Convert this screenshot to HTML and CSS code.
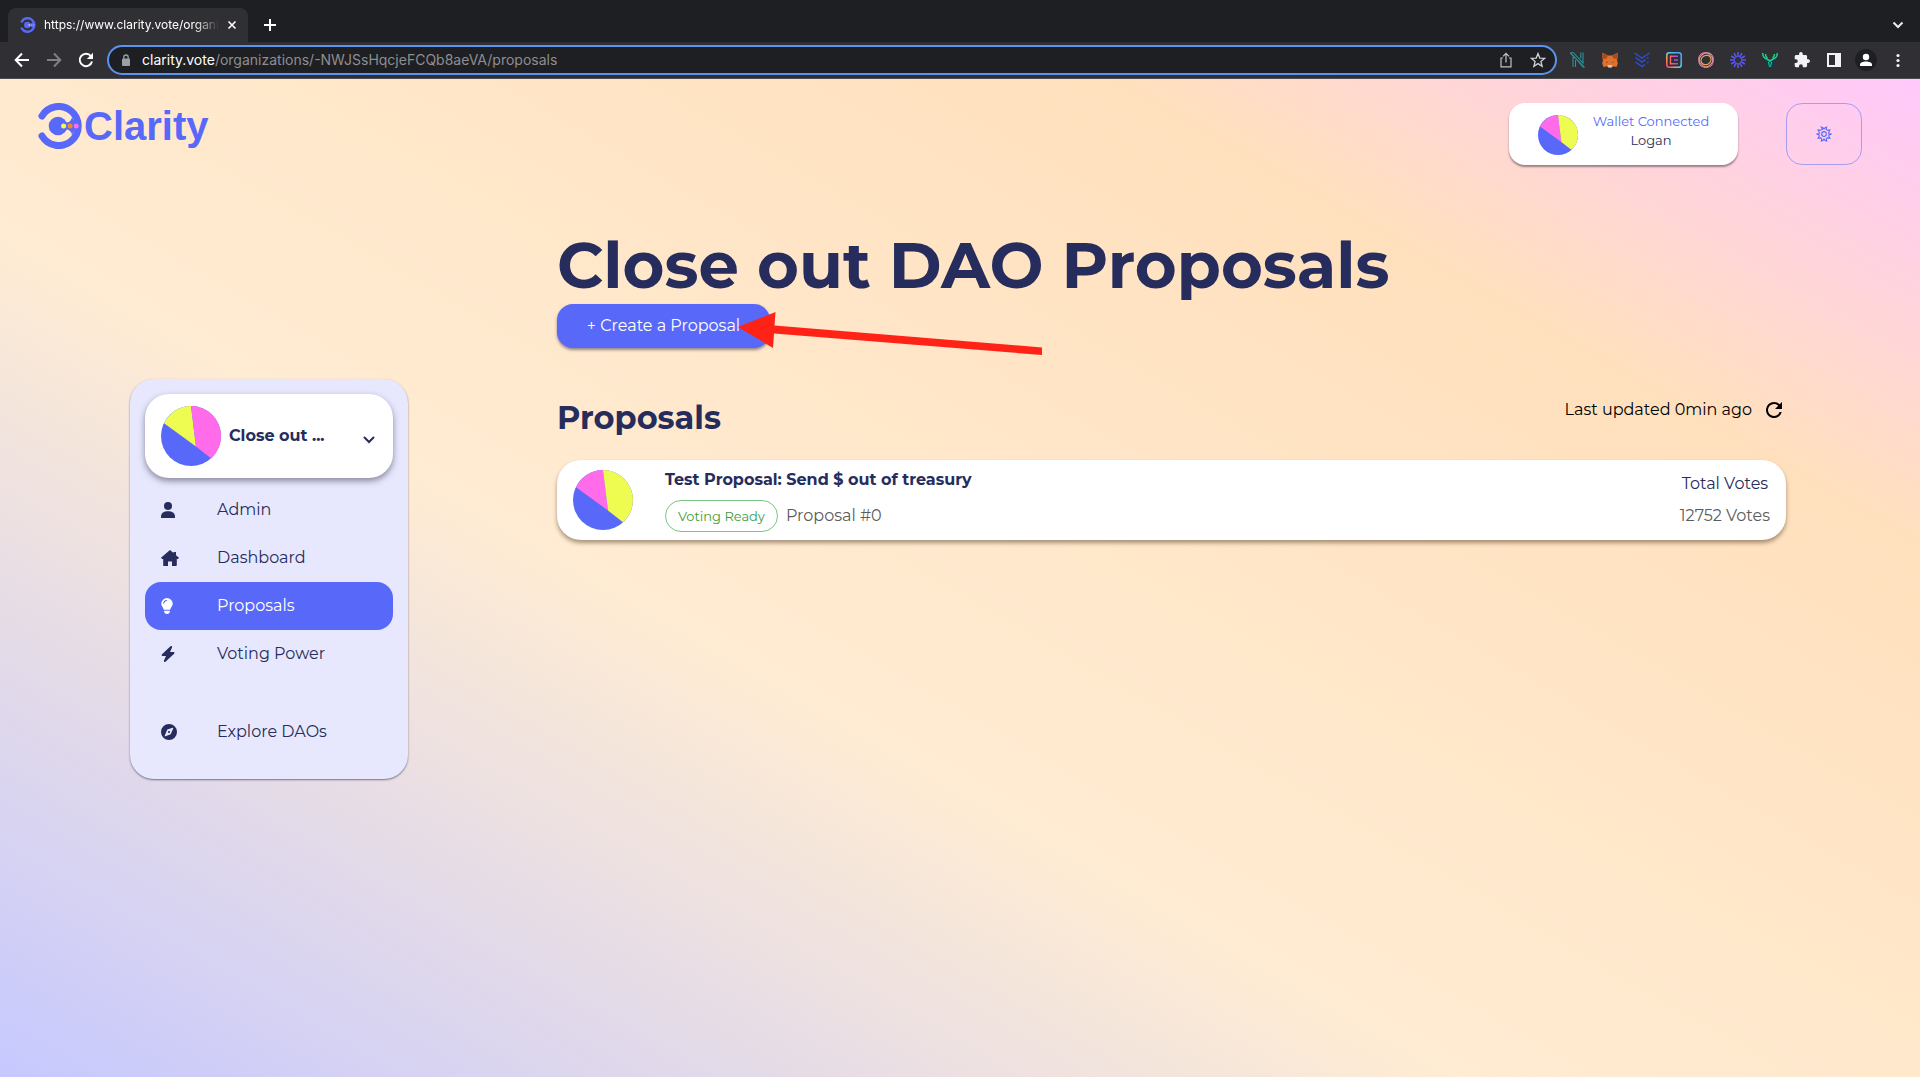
FILE: index.html
```html
<!DOCTYPE html>
<html lang="en">
<head>
<meta charset="utf-8">
<meta name="viewport" content="width=device-width, initial-scale=1">
<title>Clarity</title>
<link rel="stylesheet" href="styles.css">
</head>
<body>
<svg class="defs" aria-hidden="true">
  <symbol id="pie" viewBox="-30 -30 60 60">
    <circle class="pie-base" r="30"/>
    <path class="pie-left" d="M5 10.5 0 -30A30 30 0 0 0 -27 -12.7Z"/>
    <path class="pie-right" d="M5 10.5 0 -30A30 30 0 0 1 20 22.3Z"/>
  </symbol>
  <symbol id="mark" viewBox="0 0 44 46">
    <g fill="none" stroke="#5869f9" stroke-width="7" stroke-linecap="round">
      <path d="M4 13A19.500 19.500 0 1 1 4 33"/>
    </g>
    <circle cx="20" cy="23" r="9.300" fill="#5869f9"/>
    <path d="M27 19.500Q33 20 34 14l5 9-5 9Q33 26 27 26.500z" fill="#5869f9"/>
    <circle cx="25.600" cy="23" r="2.500" fill="#eefc52"/>
    <circle cx="32" cy="23" r="2.500" fill="#f58a1f"/>
    <circle cx="38.200" cy="23" r="2.500" fill="#ff6be8"/>
  </symbol>
</svg>

<header class="browser">
  <div class="tabs">
    <div class="tab">
      <svg class="i16"><use href="#mark"/></svg>
      <span class="tab-title">https://www.clarity.vote/organi</span>
      <button class="bare" aria-label="Close tab"><svg width="10" height="10" viewBox="0 0 10 10"><path d="M1.500 1.500l7 7M8.500 1.500l-7 7" stroke="#fff" stroke-width="1.600"/></svg></button>
    </div>
    <button class="bare new-tab" aria-label="New tab"><svg width="12" height="12" viewBox="0 0 12 12"><path d="M6 0v12M0 6h12" stroke="#fff" stroke-width="2"/></svg></button>
    <button class="bare tab-search" aria-label="Search tabs"><svg width="12" height="8" viewBox="0 0 12 8"><path d="M1.500 1.500L6 6l4.500-4.500" fill="none" stroke="#e8eaed" stroke-width="2"/></svg></button>
  </div>
  <div class="toolbar">
    <button class="tool" aria-label="Back"><svg class="i16" viewBox="0 0 16 16"><path d="M15 8H2M8 1.500L1.700 8 8 14.500" fill="none" stroke="#fff" stroke-width="2"/></svg></button>
    <button class="tool" aria-label="Forward"><svg class="i16" viewBox="0 0 16 16"><path d="M1 8h13M8 1.500L14.300 8 8 14.500" fill="none" stroke="#808184" stroke-width="2"/></svg></button>
    <button class="tool" aria-label="Reload"><svg class="i16" viewBox="0 0 16 16"><path d="M13 4.300A6.200 6.200 0 1 0 14 9.500" fill="none" stroke="#fff" stroke-width="2"/><path d="M15 .8V7H8.800z" fill="#fff"/></svg></button>
    <div class="omnibox">
      <svg width="10" height="12" viewBox="0 0 10 12"><rect x="1" y="4.500" width="8" height="7.500" rx="1" fill="#9aa0a6"/><path d="M2.800 5V3.200a2.200 2.200 0 0 1 4.400 0V5" fill="none" stroke="#9aa0a6" stroke-width="1.300"/></svg>
      <div class="url" role="textbox" contenteditable="true" aria-label="Address"><span class="host">clarity.vote</span>/organizations/-NWJSsHqcjeFCQb8aeVA/proposals</div>
      <button class="tool" aria-label="Share"><svg class="i16" viewBox="0 0 16 16"><path d="M5 6H3v8.800h10V6h-2M8 10.500V1.500M5 4.300L8 1.300l3 3" fill="none" stroke="#bdc1c6" stroke-width="1.200"/></svg></button>
      <button class="tool" aria-label="Bookmark"><svg class="i16" viewBox="0 0 16 16"><path d="M8 1.600l1.800 4.500 4.800.3-3.700 3.100 1.200 4.700L8 11.600l-4.100 2.600 1.200-4.700L1.400 6.400l4.800-.3z" fill="none" stroke="#d0d2d6" stroke-width="1.300"/></svg></button>
    </div>
    <button class="tool" aria-label="Extension N"><svg class="i16" viewBox="0 0 16 16"><path d="M3 15V3.500L13.500 15.500M0 .7h3.500L13 11V.5M0 .7L14.500 15.500M5.500 8v7M10.800 .5v6" fill="none" stroke="#2b9398" stroke-width="1.100"/></svg></button>
    <button class="tool" aria-label="MetaMask"><svg class="i16" viewBox="0 0 16 16"><path d="M.5.8L6 3.500h4L15.500.8 16 5l-1 3 .8 3.500-1.300 3.500-4-.8-1 1.300h-3l-1-1.300-4 .8L.2 11.500 1 8 0 5z" fill="#e2702a"/><path d="M.5.800L6 3.500 4.500 6.500 1 7 0 5zM15.500.8L10 3.500l1.500 3 3.500.5L16 5z" fill="#a54c20"/><path d="M6 13h4l.5 1.500-1 1h-3l-1-1z" fill="#d5c5b8"/><path d="M4 9.500l2.500 1H4.800zM12 9.500l-2.500 1h1.700z" fill="#2b3340"/></svg></button>
    <button class="tool" aria-label="Extension chevrons"><svg class="i16" viewBox="0 0 16 16"><path d="M.5 1L8 6l7.500-5M1.500 5.500L8 10l3.500-2.300M1.500 10L8 14.500l3-2M13 6.500l1.500-1M13 11l1.500-1" fill="none" stroke="#2e4bd3" stroke-width="1.500"/></svg></button>
    <button class="tool" aria-label="Extension E"><svg class="i16" viewBox="0 0 16 16"><defs><linearGradient id="frame" x1="0" y1="1" x2="1" y2="0"><stop offset="0" stop-color="#ff3f7f"/><stop offset=".3" stop-color="#ffa04b"/><stop offset=".5" stop-color="#52dce0"/><stop offset=".8" stop-color="#55a8f8"/></linearGradient><linearGradient id="letter"><stop offset="0" stop-color="#ff6a5a"/><stop offset=".6" stop-color="#b04df0"/><stop offset="1" stop-color="#5f6cf5"/></linearGradient></defs><rect x=".8" y=".8" width="14.400" height="14.400" rx="2.500" fill="none" stroke="url(#frame)" stroke-width="1.500"/><path d="M12 4.300H4.500v7.500H12M8 8h4" fill="none" stroke="url(#letter)" stroke-width="1.400"/></svg></button>
    <button class="tool" aria-label="Extension ring"><svg class="i16" viewBox="0 0 16 16"><g fill="none"><ellipse cx="8" cy="8" rx="7.800" ry="6.500" stroke="#f07f9d" transform="rotate(45 8 8)"/><ellipse cx="8" cy="8" rx="7.800" ry="6.500" stroke="#e59ab0" transform="rotate(-45 8 8)"/><ellipse cx="8" cy="8" rx="5.200" ry="4.500" stroke="#f0a050" stroke-width="1.200" transform="rotate(-30 8 8)"/></g></svg></button>
    <button class="tool" aria-label="Extension burst"><svg class="i16" viewBox="0 0 16 16"><path d="M8 0v5M8 11v5M0 8h5M11 8h5M4 1.100l2.500 4.300M9.500 10.600l2.500 4.300M1.100 4l4.300 2.500M10.600 9.500l4.300 2.500M1.100 12l4.300-2.500M10.600 6.500L14.900 4M4 14.900l2.500-4.300M9.500 5.400L12 1.100" stroke="#5a55f2" stroke-width="1.600"/></svg></button>
    <button class="tool" aria-label="Extension stag"><svg class="i16" viewBox="0 0 16 16"><path d="M3.500 7h9L11 14l-3 2-3-2z" fill="#0b3d5c"/><path d="M.7 1c0 4 1.500 5.500 4.500 6.300L8 9l2.800-1.700C13.800 6.500 15.300 5 15.300 1M3.500 2c0 2 .5 3 2 4M12.500 2c0 2-.5 3-2 4" fill="none" stroke="#1fcf8b" stroke-width="1.500"/><path d="M6.500 10l.7 3.500.8 1.500.8-1.500.7-3.500" fill="none" stroke="#1fcf8b"/></svg></button>
    <button class="tool" aria-label="Extensions"><svg class="i16" viewBox="1 1 22 22"><path fill="#f1f3f4" d="M20.500 11H19V7c0-1.100-.9-2-2-2h-4V3.500a2.500 2.500 0 0 0-5 0V5H4c-1.100 0-2 .9-2 2v3.800h1.500a2.700 2.700 0 0 1 0 5.400H2V20c0 1.100.9 2 2 2h3.800v-1.500a2.700 2.700 0 0 1 5.400 0V22H17c1.100 0 2-.9 2-2v-4h1.500a2.500 2.500 0 0 0 0-5z"/></svg></button>
    <button class="tool" aria-label="Side panel"><svg class="i16" viewBox="0 0 16 16"><path fill="#f1f3f4" fill-rule="evenodd" d="M1 1h14v14H1zM3 3v10h6V3z"/></svg></button>
    <button class="tool" aria-label="Profile"><svg width="22" height="22" viewBox="0 0 22 22"><circle cx="11" cy="11" r="11" fill="#1e1f22"/><circle cx="11" cy="8" r="3.200" fill="#fff"/><path d="M5 17v-1.500c0-2 3-3 6-3s6 1 6 3V17z" fill="#fff"/></svg></button>
    <button class="tool" aria-label="Menu"><svg class="i16" viewBox="0 0 16 16"><g fill="#f1f3f4"><circle cx="8" cy="3.500" r="1.600"/><circle cx="8" cy="8.500" r="1.600"/><circle cx="8" cy="13.500" r="1.600"/></g></svg></button>
  </div>
</header>

<div class="page">
  <header class="top">
    <a class="brand" href="#"><svg width="44" height="46"><use href="#mark"/></svg><span>Clarity</span></a>
    <button class="wallet">
      <svg class="pie" width="40" height="40"><use href="#pie"/></svg>
      <span class="wallet-text"><span class="accent">Wallet Connected</span><span>Logan</span></span>
    </button>
    <button class="settings" aria-label="Settings"><svg width="16" height="16" viewBox="-8 -8 16 16" fill="none" stroke="#5869f9"><path d="M-1.600 -4.700L-2.600 -6.900-.8 -6 0 -5 .8 -6 2.600 -6.900 2.200 -4.500 3.300 -3.700 5.900 -4 4.700 -1.700 4.900 -.5 7 0 4.900 .9 4.700 2 5.900 4.200 3.400 3.900 2.200 4.700 2.600 7 .8 6.200 0 5.200-.8 6.200-2.600 7-2.200 4.700-3.400 3.900-5.900 4.200-4.700 2-4.900 .9-7 0-4.900-.5-4.700-1.700-5.900-4-3.300-3.700Z" stroke-width="1.100"/><circle r="2.300" stroke-width="1.200"/></svg></button>
  </header>

  <div class="layout">
    <nav class="sidebar" aria-label="Organization">
      <button class="org">
        <svg class="pie pie-alt" width="60" height="60"><use href="#pie"/></svg>
        <span>Close out ...</span>
        <svg class="org-arrow" width="12" height="8" viewBox="0 0 12 8"><path d="M1.500 1.500L6 6l4.500-4.500" fill="none" stroke="#262c5c" stroke-width="2" stroke-linecap="round"/></svg>
      </button>
      <a class="item" href="#"><svg width="14" height="16" viewBox="0 0 14 16"><circle cx="7" cy="4" r="4"/><path d="M0 16v-1.500C0 11 3 9.300 7 9.300s7 1.700 7 5.200V16z"/></svg>Admin</a>
      <a class="item" href="#"><svg width="18" height="16" viewBox="0 0 18 16"><path d="M9 0l3.500 3V2H15v3.200l3 2.600L17 9h-1.200v6c0 .6-.4 1-1 1H11v-4.500H7V16H3.200c-.6 0-1-.4-1-1V9H1L0 7.800z"/></svg>Dashboard</a>
      <a class="item active" href="#"><svg width="12" height="16" viewBox="0 0 12 16"><path fill-rule="evenodd" d="M6 0a5.700 5.700 0 0 1 5.700 5.700c0 2.600-2 3.600-2.600 6.100H2.900C2.300 9.300.3 8.300.3 5.700A5.700 5.700 0 0 1 6 0zM6 2A3.700 3.700 0 0 0 2.200 5.700h1A2.800 2.800 0 0 1 6 3z"/><path d="M3 12.800h6c0 1.800-1 3.200-3 3.200s-3-1.400-3-3.200z"/></svg>Proposals</a>
      <a class="item" href="#"><svg width="14" height="16" viewBox="0 0 14 16"><path d="M10 0c1 0 1.300.8 1 1.500L9 6h3.500c1 0 1.300 1 .6 1.700L4.500 15.700C3.500 16.500 2.500 15.700 3 14.500L5 10H1.500C.6 10 .4 9 1 8.300L9.500.3z"/></svg>Voting Power</a>
      <a class="item separate" href="#"><svg width="16" height="16" viewBox="0 0 16 16"><path fill-rule="evenodd" d="M8 0a8 8 0 1 1 0 16A8 8 0 0 1 8 0zM12.300 4.300c.2-.5-.2-.8-.7-.6L6.300 5.600 3.700 11.700c-.2.500.2.800.700.600l5.300-2z"/><circle cx="8" cy="8" r="1.100"/></svg>Explore DAOs</a>
    </nav>

    <main class="content">
      <h1>Close out DAO Proposals</h1>
      <div class="create-wrap">
        <button class="create">+ Create a Proposal</button>
        <svg class="arrow" width="304" height="44" viewBox="0 0 304 44" aria-hidden="true"><path fill="#fe2316" d="M0 15L37.500 0 36.500 13.500 304 35.500v7.500L36 21.500 35 36z"/></svg>
      </div>
      <div class="section">
        <h2>Proposals</h2>
        <span class="updated">Last updated 0min ago <button class="bare" aria-label="Refresh"><svg width="24" height="24" viewBox="0 0 24 24"><path d="M17.650 6.350A7.960 7.960 0 0 0 12 4a8 8 0 1 0 7.730 10h-2.080A6 6 0 1 1 12 6c1.660 0 3.140.69 4.220 1.780L13 11h7V4z"/></svg></button></span>
      </div>
      <a class="proposal" href="#">
        <svg class="pie" width="60" height="60"><use href="#pie"/></svg>
        <span class="info">
          <strong>Test Proposal: Send $ out of treasury</strong>
          <span class="meta"><span class="chip">Voting Ready</span><span>Proposal #0</span></span>
        </span>
        <span class="votes"><span class="votes-label">Total Votes</span><span>12752 Votes</span></span>
      </a>
    </main>
  </div>
</div>
</body>
</html>
```
FILE: styles.css
```css
* { box-sizing: border-box; }

body {
  margin: 0;
  min-height: 100vh;
  display: flex;
  flex-direction: column;
  font: 16px/24px Montserrat, Inter, sans-serif;
  color: #262c5c;
}

button {
  font: inherit;
  color: inherit;
  border: 0;
  padding: 0;
  background: none;
  cursor: pointer;
}

a { color: inherit; text-decoration: none; }
svg { display: block; flex: none; }
h1, h2 { margin: 0; font-weight: 700; }

.defs { position: absolute; width: 0; height: 0; }
.bare { display: flex; }
.i16 { width: 16px; height: 16px; }

.pie-base { fill: #5869f9; }
.pie-left { fill: var(--left, #ff6be8); }
.pie-right { fill: var(--right, #eefc52); }
.pie-alt { --left: #eefc52; --right: #ff6be8; }

/* Browser window */
.browser {
  background: #1e1f22;
  color: #fff;
  font-family: Inter, sans-serif;
}

.tabs {
  display: flex;
  align-items: center;
  height: 42px;
  padding: 8px 16px 0 8px;
}

.tab {
  display: flex;
  align-items: center;
  gap: 8px;
  width: 240px;
  height: 34px;
  padding: 0 11px 0 12px;
  border-radius: 8px 8px 0 0;
  background: #303034;
  font-size: 12px;
}

.tab-title {
  flex: 1;
  overflow: hidden;
  white-space: nowrap;
  -webkit-mask-image: linear-gradient(90deg, #000 86%, transparent);
  mask-image: linear-gradient(90deg, #000 86%, transparent);
}

.new-tab { margin-left: 16px; }
.tab-search { margin-left: auto; }

.toolbar {
  display: flex;
  align-items: center;
  height: 37px;
  padding: 0 6px;
  background: #303034;
  border-bottom: 1px solid #4d4c50;
}

.tool {
  display: grid;
  place-items: center;
  flex: none;
  width: 32px;
  height: 32px;
}

.omnibox {
  flex: 1;
  display: flex;
  align-items: center;
  height: 30px;
  margin: 0 5px;
  padding: 0 1px 0 12px;
  border: 2px solid #5b94f0;
  border-radius: 15px;
  background: #1e1f22;
}

.url {
  flex: 1;
  margin-left: 11px;
  font-size: 14px;
  color: #8d8e91;
  white-space: nowrap;
  outline: 0;
}

.host { color: #fff; }

/* Application page */
.page {
  flex: 1;
  padding-bottom: 40px;
  background: linear-gradient(30deg, #c6c8ff 0%, #ffecd3 40%, #ffe0bd 78%, #ffc8fb 100%);
}

.top {
  display: flex;
  align-items: flex-start;
  gap: 48px;
  padding: 24px 58px 0 38px;
}

.brand {
  display: flex;
  align-items: center;
  gap: 2px;
  margin-right: auto;
  font: 700 40px/46px "Liberation Sans", Arial, sans-serif;
  color: #5869f9;
}

.wallet {
  display: flex;
  align-items: center;
  justify-content: center;
  gap: 15px;
  width: 229px;
  height: 62px;
  padding-top: 2px;
  border-radius: 16px;
  background: #fff;
  box-shadow: 0 2px 2px rgba(60, 40, 50, .5);
  font-size: 13px;
  line-height: 19px;
}

.wallet-text { display: grid; margin-bottom: 8px; }
.accent { color: #5869f9; }

.settings {
  display: grid;
  place-items: center;
  width: 76px;
  height: 62px;
  border: 1px solid #a89cf2;
  border-radius: 16px;
}

.layout {
  display: grid;
  grid-template-columns: 278px 1fr;
  gap: 149px;
  align-items: start;
  padding: 59px 134px 0 130px;
}

.sidebar {
  display: flex;
  flex-direction: column;
  margin-top: 155px;
  padding: 15px 15px 23px;
  border-radius: 24px;
  background: #e7e8fe;
  box-shadow: 0 1px 2px rgba(40, 40, 70, .6);
}

.org {
  display: flex;
  align-items: center;
  gap: 8px;
  height: 84px;
  margin-bottom: 8px;
  padding: 0 18px 0 16px;
  border-radius: 24px;
  background: #fff;
  box-shadow: 0 3px 6px rgba(40, 40, 60, .5);
  font-weight: 700;
}

.org-arrow { margin: 8px 0 0 auto; }

.item {
  display: grid;
  grid-template-columns: 56px 1fr;
  align-items: center;
  height: 48px;
  padding: 0 16px;
  border-radius: 16px;
}

.item svg { fill: currentColor; }
.active { background: #5869f9; color: #fff; }
.separate { margin-top: 30px; }

h1 {
  padding-top: 2px;
  font-size: 64px;
  line-height: 78px;
}

.create-wrap { position: relative; width: fit-content; }

.create {
  display: block;
  width: 213px;
  height: 44px;
  border-radius: 16px;
  background: #5869f9;
  box-shadow: 0 2px 3px rgba(40, 40, 70, .5);
  color: #fff;
}

/* Callout lying over the create button */
.arrow { position: absolute; left: 181px; top: 8px; }

.section {
  display: flex;
  justify-content: space-between;
  margin: 50px 0 22px;
}

h2 { font-size: 32px; line-height: 40px; }

.updated {
  display: flex;
  gap: 10px;
  height: 24px;
  color: #000;
}

.proposal {
  display: flex;
  align-items: center;
  height: 80px;
  padding: 0 16px;
  border-radius: 24px;
  background: #fff;
  box-shadow: 0 3px 4px rgba(60, 40, 20, .45);
}

.info { display: grid; gap: 8px; margin-left: 32px; }
.info strong { line-height: 24px; }

.meta {
  display: flex;
  align-items: center;
  gap: 8px;
  color: #5c5c5c;
}

.chip {
  height: 32px;
  padding: 0 12px;
  border: 1px solid #7cc682;
  border-radius: 16px;
  color: #3a9c40;
  font-size: 13px;
  line-height: 30px;
}

.votes {
  display: grid;
  gap: 8px;
  margin-left: auto;
  text-align: center;
  color: #5c5c5c;
}

.votes-label { color: #262c5c; }
```
